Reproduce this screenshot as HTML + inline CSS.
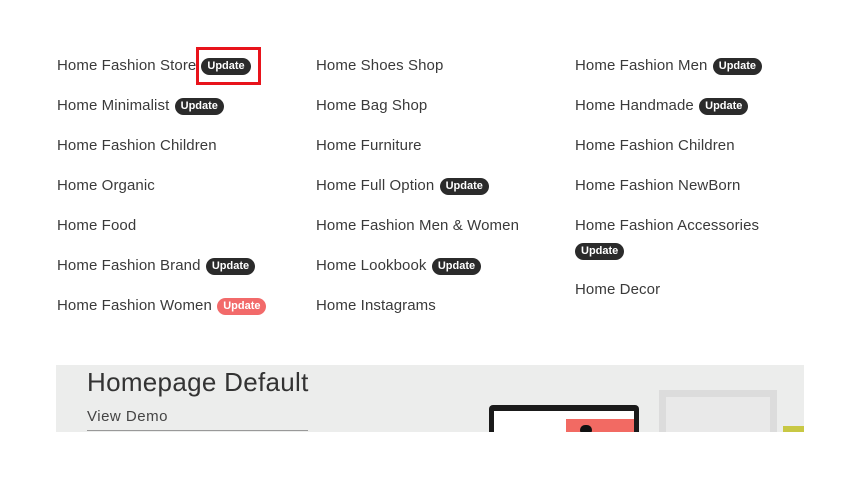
<!DOCTYPE html>
<html><head><style>
body{margin:0;width:861px;height:488px;background:#fff;position:relative;overflow:hidden;font-family:"Liberation Sans",sans-serif;}
.i{position:absolute;font-size:15px;color:#3a3a3a;line-height:20px;white-space:nowrap;letter-spacing:0.1px}
.b{display:inline-block;background:#2b2b2b;color:#fff;font-size:11px;font-weight:bold;line-height:17px;height:17px;padding:0 6px;border-radius:9px;vertical-align:1px;letter-spacing:0;margin-left:1px}
.r{background:#f26a6a}
.box{position:absolute;left:196px;top:47px;width:59px;height:32px;border:3px solid #e8131b}
</style></head><body>
<div class="i" style="left:57px;top:56px">Home Fashion Store<span class="b" style="margin-left:5px">Update</span></div>
<div class="box"></div>
<div class="i" style="left:57px;top:96px">Home Minimalist <span class="b">Update</span></div>
<div class="i" style="left:57px;top:136px">Home Fashion Children</div>
<div class="i" style="left:57px;top:176px">Home Organic</div>
<div class="i" style="left:57px;top:216px">Home Food</div>
<div class="i" style="left:57px;top:256px">Home Fashion Brand <span class="b">Update</span></div>
<div class="i" style="left:57px;top:296px">Home Fashion Women <span class="b r">Update</span></div>

<div class="i" style="left:316px;top:56px">Home Shoes Shop</div>
<div class="i" style="left:316px;top:96px">Home Bag Shop</div>
<div class="i" style="left:316px;top:136px">Home Furniture</div>
<div class="i" style="left:316px;top:176px">Home Full Option <span class="b">Update</span></div>
<div class="i" style="left:316px;top:216px">Home Fashion Men &amp; Women</div>
<div class="i" style="left:316px;top:256px">Home Lookbook <span class="b">Update</span></div>
<div class="i" style="left:316px;top:296px">Home Instagrams</div>

<div class="i" style="left:575px;top:56px">Home Fashion Men <span class="b">Update</span></div>
<div class="i" style="left:575px;top:96px">Home Handmade <span class="b">Update</span></div>
<div class="i" style="left:575px;top:136px">Home Fashion Children</div>
<div class="i" style="left:575px;top:176px">Home Fashion NewBorn</div>
<div class="i" style="left:575px;top:216px">Home Fashion Accessories</div>
<div class="i" style="left:574px;top:241px"><span class="b">Update</span></div>
<div class="i" style="left:575px;top:280px">Home Decor</div>

<div style="position:absolute;left:56px;top:365px;width:748px;height:67px;background:#ecedec;overflow:hidden">
 <div style="position:absolute;left:31px;top:2px;font-size:26px;color:#333;font-weight:300;letter-spacing:0.3px">Homepage Default</div>
 <div style="position:absolute;left:31px;top:43px;font-size:15px;color:#444;letter-spacing:0.5px">View Demo</div>
 <div style="position:absolute;left:31px;top:65px;width:221px;height:1px;background:#999"></div>
 <div style="position:absolute;left:433px;top:40px;width:150px;height:40px;background:#1a1a1a;border-radius:4px"></div>
 <div style="position:absolute;left:438px;top:46px;width:140px;height:30px;background:#fff"></div>
 <div style="position:absolute;left:510px;top:54px;width:68px;height:20px;background:#f26a63"></div>
 <div style="position:absolute;left:524px;top:60px;width:12px;height:10px;background:#111;border-radius:6px"></div>
 <div style="position:absolute;left:603px;top:25px;width:118px;height:50px;background:#dcdcdc"></div>
 <div style="position:absolute;left:610px;top:32px;width:104px;height:40px;background:#e9e9e9"></div>
 <div style="position:absolute;left:727px;top:61px;width:21px;height:10px;background:#c8c844"></div>
</div>
</body></html>
